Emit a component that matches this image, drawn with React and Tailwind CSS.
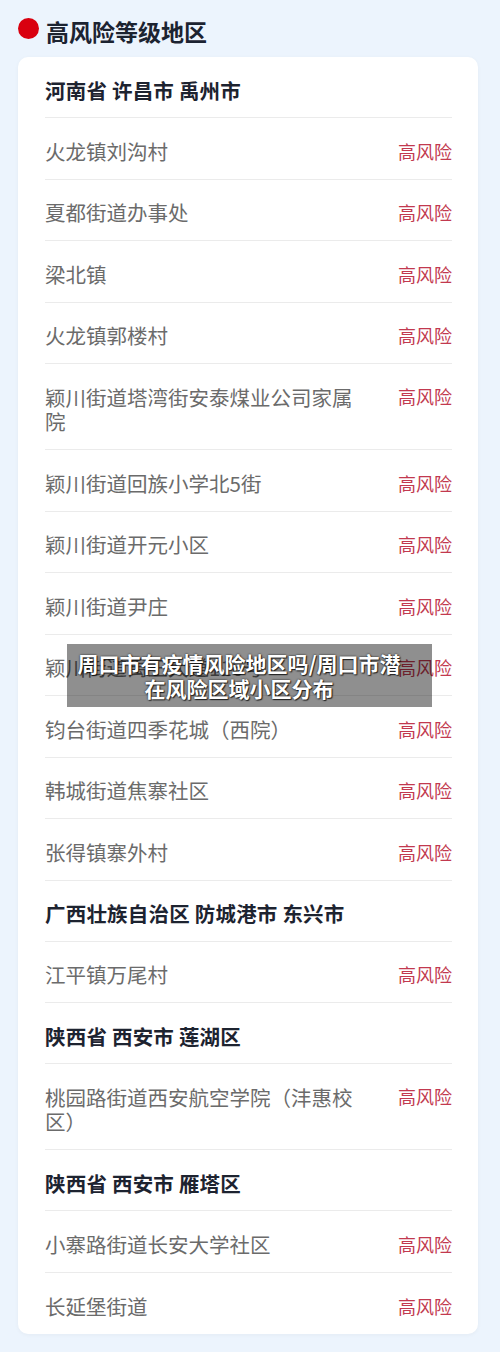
import React from "react";

const sections = [
  {
    title: "河南省 许昌市 禹州市",
    rows: [
      "火龙镇刘沟村",
      "夏都街道办事处",
      "梁北镇",
      "火龙镇郭楼村",
      ["颖川街道塔湾街安泰煤业公司家属院"],
      "颖川街道回族小学北5街",
      "颖川街道开元小区",
      "颖川街道尹庄",
      "颖川街道禹王大道116号",
      "钧台街道四季花城（西院）",
      "韩城街道焦寨社区",
      "张得镇寨外村",
    ],
  },
  { title: "广西壮族自治区 防城港市 东兴市", rows: ["江平镇万尾村"] },
  { title: "陕西省 西安市 莲湖区", rows: [["桃园路街道西安航空学院（沣惠校区）"]] },
  { title: "陕西省 西安市 雁塔区", rows: ["小寨路街道长安大学社区", "长延堡街道"] },
];

export default function App() {
  const items = [];
  sections.forEach((s, si) => {
    items.push({ type: "h", text: s.title, key: "h" + si });
    s.rows.forEach((r, ri) =>
      items.push({
        type: Array.isArray(r) ? "d" : "r",
        text: Array.isArray(r) ? r[0] : r,
        key: "r" + si + "-" + ri,
      })
    );
  });
  return (
    <div
      className="relative w-[500px] min-h-[1352px] bg-[#ecf4fd] pt-[18px] pl-[18px] pr-[22px]"
      style={{ fontFamily: '"Noto Sans CJK SC", "Noto Sans", sans-serif' }}
    >
      <div className="flex items-center h-[24px]">
        <div className="w-[21px] h-[21px] rounded-full bg-[#d9000f] -mt-[4px]" />
        <div className="ml-[7px] text-[23px] leading-[28px] font-bold text-[#1c2331] mt-[2px]">高风险等级地区</div>
      </div>
      <div className="mt-[15px] bg-white rounded-[10px] shadow-[0_1px_4px_rgba(0,0,0,0.04)] pr-[26px] pl-[27px]">
        {items.map((it, i) => {
          const border = i < items.length - 1 ? " border-b border-[#ebebeb]" : "";
          if (it.type === "h") {
            return (
              <div key={it.key} className={"flex items-center h-[61px] pt-[5px]" + border}>
                <div className="text-[20.5px] leading-[24px] font-bold text-[#1d2330] tracking-[0.2px]">{it.text}</div>
              </div>
            );
          }
          return (
            <div
              key={it.key}
              className={
                "flex items-center justify-between pt-[5px] " + (it.type === "d" ? "h-[86px]" : "h-[61.5px]") + border
              }
            >
              <div className="w-[312px] text-[20.5px] leading-[24px] text-[#6b6b6b]">{it.text}</div>
              <div className="self-start flex items-center h-full">
                <div
                  className={
                    "text-[18px] leading-[24px] text-[#c2394f] " + (it.type === "d" ? "-mt-[26px]" : "")
                  }
                >
                  高风险
                </div>
              </div>
            </div>
          );
        })}
      </div>
      <div className="absolute left-[67px] top-[644px] w-[365px] h-[63px] bg-[rgba(0,0,0,0.44)] flex items-center">
        <div
          className="ml-[9px] text-white font-bold text-[21px] leading-[25px] text-center w-[326px]"
          style={{ textShadow: "0 0 2px rgba(0,0,0,0.9), 1px 1px 1px rgba(0,0,0,0.7)" }}
        >
          周口市有疫情风险地区吗/周口市潜在风险区域小区分布
        </div>
      </div>
    </div>
  );
}
